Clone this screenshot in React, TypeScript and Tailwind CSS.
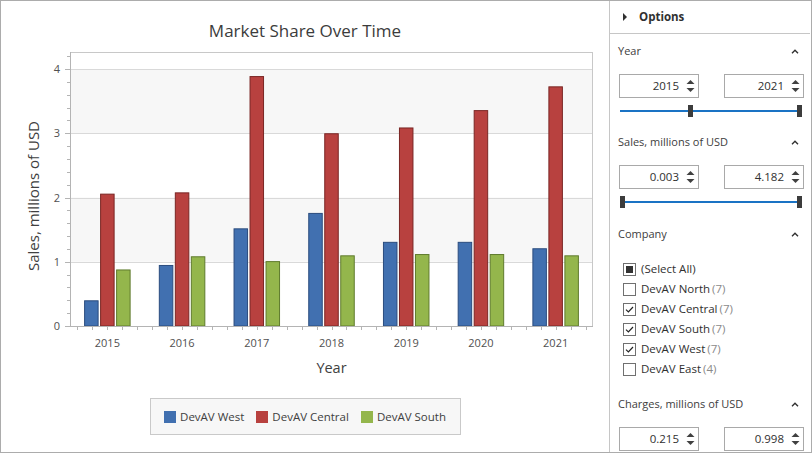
import React from "react";

const years = [2015, 2016, 2017, 2018, 2019, 2020, 2021];
const west = [0.4, 0.95, 1.52, 1.76, 1.31, 1.31, 1.21];
const central = [2.06, 2.08, 3.89, 3.0, 3.09, 3.36, 3.73];
const south = [0.88, 1.085, 1.01, 1.1, 1.12, 1.12, 1.1];

const X0 = 70;
const X1 = 593;
const Y0 = 326;
const YT = 52;
const PX = 64.25;
const CW = (X1 - X0) / 7;

const series = [
  { data: west, fill: "#4170b0", stroke: "#2b4c7e" },
  { data: central, fill: "#b8413f", stroke: "#7a2624" },
  { data: south, fill: "#94b64c", stroke: "#5f7b2d" },
];

function Chart() {
  const y = (v: number) => Y0 - v * PX;
  const minorY: number[] = [];
  for (let i = 0; i <= 21; i++) minorY.push(i / 5);
  const xTicks: number[] = [];
  for (let k = 0; k < 35; k++) xTicks.push(X0 + CW * (0.1 + 0.2 * k));
  return (
    <svg width={608} height={384} viewBox="1 1 608 384" className="block">
      <text x={305} y={36.5} textAnchor="middle" fontSize={17} fill="#3c3c3c">
        Market Share Over Time
      </text>
      <rect x={X0} y={YT} width={X1 - X0} height={Y0 - YT} fill="#ffffff" />
      <rect x={X0} y={y(4)} width={X1 - X0} height={PX} fill="#f7f7f7" />
      <rect x={X0} y={y(2)} width={X1 - X0} height={PX} fill="#f7f7f7" />
      {[1, 2, 3, 4].map((v) => (
        <line key={v} x1={X0} x2={X1} y1={Math.round(y(v)) + 0.5} y2={Math.round(y(v)) + 0.5} stroke="#d9d9d9" strokeWidth={1} />
      ))}
      {years.map((yr, i) => {
        const c = X0 + CW * (i + 0.5);
        return series.map((s, k) => {
          const left = c - 23.25 + k * 16;
          const top = y(s.data[i]);
          return (
            <rect
              key={`${yr}-${k}`}
              x={left + 0.5}
              y={top + 0.5}
              width={13.5}
              height={Y0 - top - 0.5}
              fill={s.fill}
              stroke={s.stroke}
              strokeWidth={1}
            />
          );
        });
      })}
      <rect x={X0 + 0.5} y={YT + 0.5} width={X1 - X0 - 1} height={Y0 - YT} fill="none" stroke="#c8c8c8" strokeWidth={1} />
      <line x1={X0 + 0.5} x2={X0 + 0.5} y1={YT} y2={Y0 + 1} stroke="#b4b4b4" />
      <line x1={X0} x2={X1} y1={Y0 + 0.5} y2={Y0 + 0.5} stroke="#b4b4b4" />
      {minorY.map((v, i) => {
        const yy = Math.round(y(v)) + 0.5;
        const major = i % 5 === 0;
        return <line key={i} x1={major ? 65 : 67} x2={X0} y1={yy} y2={yy} stroke="#b4b4b4" />;
      })}
      {xTicks.map((x, i) => (
        <line key={i} x1={Math.round(x) + 0.5} x2={Math.round(x) + 0.5} y1={Y0} y2={Y0 + 4} stroke="#b4b4b4" />
      ))}
      {[0, 1, 2, 3, 4].map((v) => (
        <text key={v} x={60} y={y(v) + 4} textAnchor="end" fontSize={11} fill="#505050">
          {v}
        </text>
      ))}
      {years.map((yr, i) => (
        <text key={yr} x={X0 + CW * (i + 0.5)} y={346.5} textAnchor="middle" fontSize={11} fill="#505050">
          {yr}
        </text>
      ))}
      <text x={331.5} y={373} textAnchor="middle" fontSize={14.5} fill="#404040">
        Year
      </text>
      <text transform="translate(39,196) rotate(-90)" textAnchor="middle" fontSize={15} fill="#404040">
        Sales, millions of USD
      </text>
    </svg>
  );
}

function Legend() {
  const items = [
    { label: "DevAV West", color: "#4170b0" },
    { label: "DevAV Central", color: "#b8413f" },
    { label: "DevAV South", color: "#94b64c" },
  ];
  return (
    <div className="flex justify-center mt-[13px]">
      <div className="w-[311px] h-[37px] bg-[#f7f7f7] border border-[#c9c9c9] flex items-center justify-center gap-[12px]">
        {items.map((it) => (
          <div key={it.label} className="flex items-center gap-[4px]">
            <div className="w-[12px] h-[12px]" style={{ backgroundColor: it.color }} />
            <span className="text-[11.5px] text-[#404040] leading-none">{it.label}</span>
          </div>
        ))}
      </div>
    </div>
  );
}

function Chevron() {
  return (
    <svg width={8} height={5} viewBox="0 0 8 5" className="block">
      <path d="M1 4.2 L4 1.2 L7 4.2" fill="none" stroke="#303030" strokeWidth={1.4} />
    </svg>
  );
}

function SectionHeader({ title }: { title: string }) {
  return (
    <div className="h-[34px] flex items-center justify-between pl-[8px] pr-[11px]">
      <span className="text-[11px] text-[#404040]">{title}</span>
      <Chevron />
    </div>
  );
}

function Spin() {
  return (
    <svg width={9} height={14} viewBox="0 0 9 14" className="block">
      <path d="M0.5 5 L4.5 1 L8.5 5 Z" fill="#404040" />
      <path d="M0.5 9 L8.5 9 L4.5 13 Z" fill="#404040" />
    </svg>
  );
}

function NumBox({ value }: { value: string }) {
  return (
    <div className="w-[80px] h-[24px] border border-[#a9a9a9] bg-white flex items-center justify-end pr-[3px]">
      <span className="text-[11.5px] text-[#303030] leading-none">{value}</span>
      <div className="ml-[7px]">
        <Spin />
      </div>
    </div>
  );
}

function Inputs({ a, b }: { a: string; b: string }) {
  return (
    <div className="flex pl-[9px] gap-[25px] mt-[6px]">
      <NumBox value={a} />
      <NumBox value={b} />
    </div>
  );
}

function RangeSlider({ left, right }: { left: number; right: number }) {
  return (
    <div className="relative h-[14px] mt-[6px] ml-[10px] w-[182px]">
      <div className="absolute left-0 right-0 top-[6px] h-[2px] bg-[#1a73c4]" />
      <div className="absolute top-[1px] w-[5px] h-[12px] bg-[#3c3c3c]" style={{ left }} />
      <div className="absolute top-[1px] w-[5px] h-[12px] bg-[#3c3c3c]" style={{ left: right }} />
    </div>
  );
}

function Check({ state }: { state: "none" | "checked" | "partial" }) {
  return (
    <div className="w-[13px] h-[13px] border border-[#707070] bg-white flex items-center justify-center shrink-0">
      {state === "partial" && <div className="w-[7px] h-[7px] bg-[#333333]" />}
      {state === "checked" && (
        <svg width={11} height={11} viewBox="0 0 11 11" className="block">
          <path d="M2 5.6 L4.4 8 L9 3" fill="none" stroke="#222222" strokeWidth={1.2} />
        </svg>
      )}
    </div>
  );
}

function CheckRow({ label, count, state }: { label: string; count?: string; state: "none" | "checked" | "partial" }) {
  return (
    <div className="h-[20px] flex items-center pl-[13px] gap-[5px]">
      <Check state={state} />
      <span className="text-[11.5px] text-[#303030] leading-none whitespace-nowrap">
        {label}
        {count && <span className="text-[#8a8a8a] ml-[2px]">{count}</span>}
      </span>
    </div>
  );
}

function Panel() {
  return (
    <div className="w-[201px] border-l border-[#c6c6c6] flex flex-col overflow-hidden">
      <div className="h-[33px] shrink-0 border-b border-[#c6c6c6] flex items-center pl-[13px] gap-[12px]">
        <svg width={4} height={8} viewBox="0 0 4 8" className="block">
          <path d="M0 0 L4 4 L0 8 Z" fill="#303030" />
        </svg>
        <span className="text-[11.5px] font-bold text-[#303030]">Options</span>
      </div>
      <div className="pb-[7px]">
        <SectionHeader title="Year" />
        <Inputs a="2015" b="2021" />
        <RangeSlider left={68} right={177} />
      </div>
      <div className="pb-[8px]">
        <SectionHeader title="Sales, millions of USD" />
        <Inputs a="0.003" b="4.182" />
        <RangeSlider left={0} right={177} />
      </div>
      <div className="pb-[8px]">
        <SectionHeader title="Company" />
        <div className="mt-[8px] flex flex-col">
          <CheckRow label="(Select All)" state="partial" />
          <CheckRow label="DevAV North" count="(7)" state="none" />
          <CheckRow label="DevAV Central" count="(7)" state="checked" />
          <CheckRow label="DevAV South" count="(7)" state="checked" />
          <CheckRow label="DevAV West" count="(7)" state="checked" />
          <CheckRow label="DevAV East" count="(4)" state="none" />
        </div>
      </div>
      <div>
        <SectionHeader title="Charges, millions of USD" />
        <Inputs a="0.215" b="0.998" />
      </div>
    </div>
  );
}

export default function App() {
  return (
    <div className="w-[812px] h-[453px] border border-[#acacac] flex bg-white overflow-hidden font-['Open_Sans',sans-serif]">
      <div className="w-[608px] flex flex-col shrink-0">
        <Chart />
        <Legend />
      </div>
      <Panel />
    </div>
  );
}
